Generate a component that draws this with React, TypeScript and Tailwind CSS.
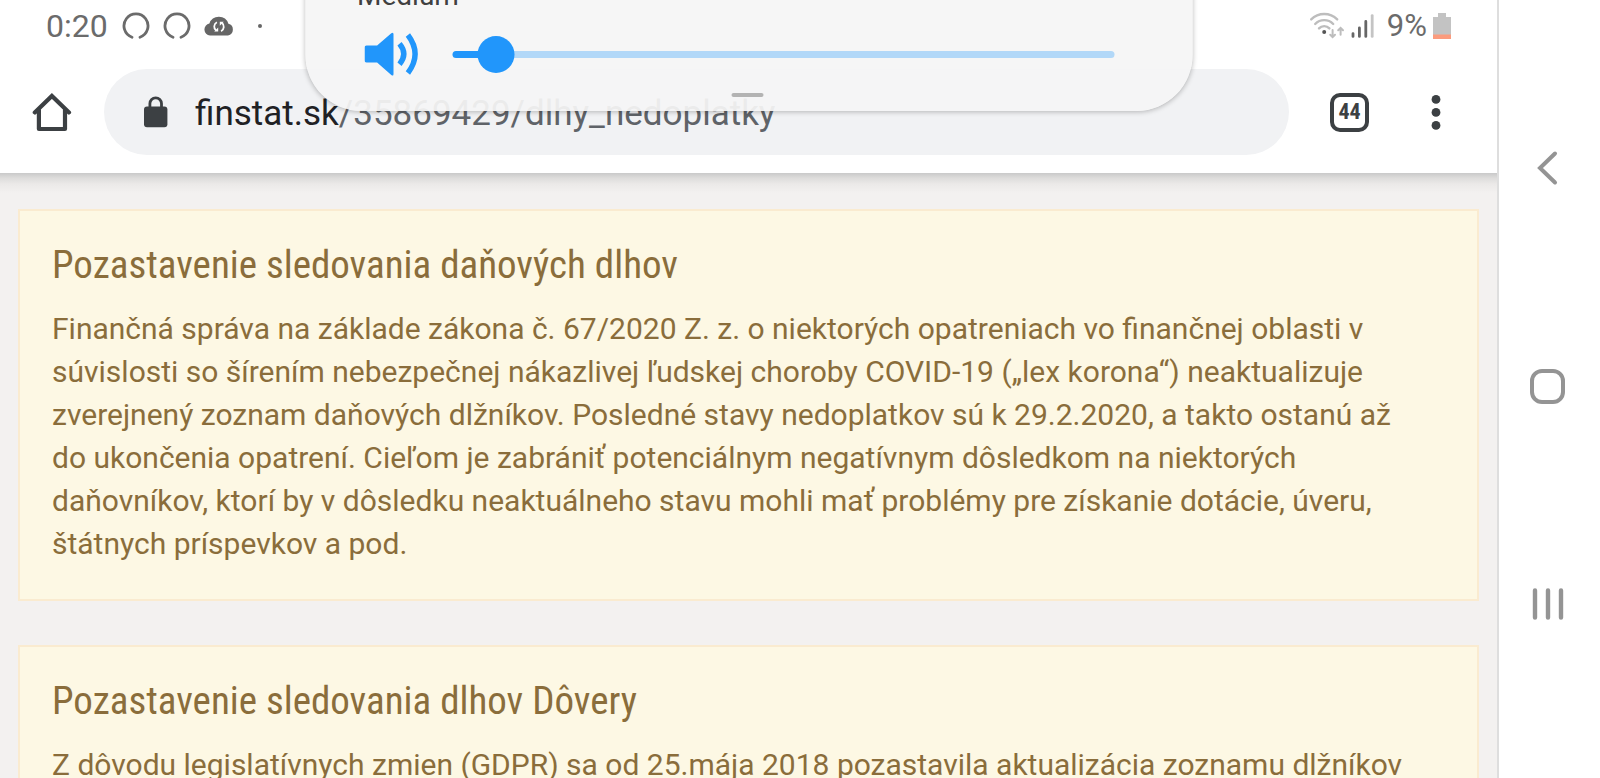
import { useState } from "react";
import type { CSSProperties } from "react";

function LoadingRing() {
  return (
    <svg className="size-7" viewBox="0 0 28 28" fill="none" stroke="#6b6b6b" strokeWidth="2.8" strokeLinecap="round">
      <path d="M10 25.2A12 12 0 1 1 18 25.2" />
    </svg>
  );
}

function StatusBar() {
  return (
    <div className="flex h-[50px] items-center justify-between pt-0.5 pr-[46px] pl-[46px] text-[#6b6b6b]">
      <div className="flex items-center">
        <span className="mr-3.5 text-[32px] leading-[48px]">0:20</span>
        <div className="flex items-center gap-[13px]">
          <LoadingRing />
          <LoadingRing />
          <svg className="h-5 w-[30px]" viewBox="0 0 30 20">
            <path
              fill="#666"
              d="M6 19.5A6 6 0 0 1 5.4 7.6 10 10 0 0 1 24.4 7.8 6 6 0 0 1 24 19.5Z"
            />
            <g fill="none" stroke="#fff" strokeWidth="1.8">
              <path d="M12.9 6.2A5 5 0 0 0 12.2 14.6" />
              <path d="M17.1 15.2A5 5 0 0 0 17.8 6.8" />
            </g>
            <path fill="#fff" d="M10.2 15.6h4v-4zM19.8 5.8h-4v4z" />
          </svg>
        </div>
        <span className="ml-6 size-1 rounded-full bg-[#666]" />
      </div>
      <div className="flex items-center">
        <svg className="mr-1.5 h-7 w-9" viewBox="0 0 36 28" fill="none" stroke="#bdbdbd" strokeWidth="2.4" strokeLinecap="round">
          <path d="M2.2 7.4A18.5 18.5 0 0 1 28.2 7.4" />
          <path d="M6.2 12A12.5 12.5 0 0 1 24.2 12" />
          <path d="M10 16.4A7 7 0 0 1 20.4 16.4" />
          <circle cx="15.2" cy="20" r="2" fill="#555" stroke="none" />
          <path strokeWidth="2" d="M23.6 18v7M21.2 22.8l2.4 2.4 2.4-2.4M31.6 22.8V16M29.2 18.2l2.4-2.4 2.4 2.4" />
        </svg>
        <svg className="mr-3 h-7 w-6" viewBox="0 0 24 28" strokeWidth="2.8" strokeLinecap="round">
          <path stroke="#666" d="M2 21.6v2.8M8.4 16v8.4M14.8 9.4v15" />
          <path stroke="#c4c4c4" d="M21.2 3.6v20.8" />
        </svg>
        <span className="mr-1.5 text-[31px] leading-[48px]">9%</span>
        <svg className="h-[26px] w-[18px]" viewBox="0 0 18 26">
          <path fill="#c3c3c3" d="M5 0h8v4h5v18H0V4h5z" />
          <path fill="#fb9b7d" d="M0 21.5h18V26H0z" />
        </svg>
      </div>
    </div>
  );
}

function BrowserBar() {
  return (
    <div className="flex h-[86px] items-center">
      <button type="button" aria-label="Domov" className="ml-8 flex size-10 shrink-0 items-center justify-center">
        <svg className="size-10" viewBox="0 0 40 40" fill="none" stroke="#3c4043" strokeWidth="4.2" strokeLinecap="round" strokeLinejoin="round">
          <path d="M2.8 20.4 19.9 4 37 20.4" strokeLinejoin="miter" />
          <path d="M6.9 18V37H33V18" />
        </svg>
      </button>
      <div className="ml-8 flex h-full flex-1 items-center rounded-full bg-[#f1f2f4] pl-10">
        <svg className="mr-[27px] h-8 w-6" viewBox="0 0 24 32">
          <rect x="0" y="10.6" width="23.4" height="20.6" rx="3" fill="#3c4043" />
          <path d="M5.9 12V7.6a5.8 5.8 0 0 1 11.6 0V12" fill="none" stroke="#3c4043" strokeWidth="2.8" />
        </svg>
        <a href="#" className="pt-1 text-[35px] leading-[48px] text-[#5f6368]">
          <span className="text-[#202124]">finstat.sk</span>/35869429/dlhy_nedoplatky
        </a>
      </div>
      <button
        type="button"
        aria-label="Karty: 44"
        className="ml-[41px] flex size-[39px] shrink-0 items-center justify-center rounded-[10px] border-4 border-[#3c4043] font-['Roboto_Condensed','Roboto',sans-serif] text-[22px] leading-6 font-bold text-[#3c4043]"
      >
        44
      </button>
      <button type="button" aria-label="Ponuka" className="mr-[41px] ml-[47px] flex h-12 w-10 shrink-0 items-center justify-center">
        <svg className="h-9 w-[10px]" viewBox="0 0 10 36" fill="#3c4043">
          <circle cx="5" cy="5.4" r="4.4" />
          <circle cx="5" cy="18.4" r="4.4" />
          <circle cx="5" cy="31.4" r="4.4" />
        </svg>
      </button>
    </div>
  );
}

function VolumePanel() {
  const [volume, setVolume] = useState(4);
  const style = { "--fill": `${volume + 2}%` } as CSSProperties;
  return (
    <section
      aria-label="Hlasitosť"
      className="absolute -top-5 left-1/2 z-20 w-[887px] -translate-x-1/2 rounded-b-[56px] bg-[#f5f5f5]/93 pr-[78px] pb-3.5 pl-[52px] shadow-[0_1px_5px_rgba(0,0,0,0.25)]"
    >
      <label htmlFor="volume" className="block text-[28px] leading-8 text-[#404040]">
        Medium
      </label>
      <div className="mt-[18px] flex h-12 items-center gap-[34px] pl-[7px]">
        <svg className="h-11 w-[54px] shrink-0" viewBox="0 0 54 44">
          <path fill="#2196fb" d="M2 13.6h10.6L26.8 1.2q2.2-1.4 2.2 1V42q0 2.4-2.2 1L12.6 30.6H2q-2 0-2-2v-13q0-2 2-2z" />
          <g fill="none" stroke="#2196fb" strokeWidth="5.4">
            <path d="M35 11.8Q43.6 22 35 32.2" />
            <path d="M43.4 3Q57.8 22 43.4 41" />
          </g>
        </svg>
        <input
          id="volume"
          type="range"
          min={0}
          max={100}
          value={volume}
          onChange={(e) => setVolume(Number(e.target.value))}
          style={style}
          className="h-9 min-w-0 flex-1 cursor-pointer appearance-none bg-transparent [&::-webkit-slider-runnable-track]:h-[7px] [&::-webkit-slider-runnable-track]:rounded-full [&::-webkit-slider-runnable-track]:bg-[linear-gradient(to_right,#2196fb_var(--fill),#b2d8f8_var(--fill))] [&::-webkit-slider-thumb]:-mt-[15px] [&::-webkit-slider-thumb]:size-[37px] [&::-webkit-slider-thumb]:appearance-none [&::-webkit-slider-thumb]:rounded-full [&::-webkit-slider-thumb]:bg-[#2196fb]"
        />
      </div>
      <div className="mt-[15px] flex justify-center pl-6">
        <span className="h-1 w-8 rounded-full bg-[#b3b3b3]" />
      </div>
    </section>
  );
}

function Notice({ title, text }: { title: string; text: string }) {
  return (
    <article className="border-2 border-[#faebd0] bg-[#fdf8e4] pt-8 pr-16 pb-[34px] pl-8 text-[#8a6d3b]">
      <h2 className="mb-5 font-['Roboto_Condensed','Roboto',sans-serif] text-[39px] leading-[44px]">{title}</h2>
      <p className="text-[30px] leading-[43px]">{text}</p>
    </article>
  );
}

function NavigationBar() {
  const button = "flex size-12 items-center justify-center";
  return (
    <nav aria-label="Navigácia" className="flex w-[103px] shrink-0 flex-col items-center justify-center gap-[170px] border-l-2 border-[#dedede] bg-white pr-1 pb-1.5">
      <button type="button" aria-label="Späť" className={button}>
        <svg className="h-9 w-6" viewBox="0 0 24 36" fill="none" stroke="#949494" strokeWidth="4" strokeLinecap="round">
          <path d="M19 3.5 4 18l15 14.5" />
        </svg>
      </button>
      <button type="button" aria-label="Domov" className={button}>
        <span className="size-[35px] rounded-[12px] border-4 border-[#949494]" />
      </button>
      <button type="button" aria-label="Posledné" className={button}>
        <svg className="h-9 w-8" viewBox="0 0 32 36" stroke="#949494" strokeWidth="4.4" strokeLinecap="round">
          <path d="M3 4.5v27M16 4.5v27M29 4.5v27" />
        </svg>
      </button>
    </nav>
  );
}

export default function App() {
  return (
    <div className="flex h-screen overflow-hidden bg-white font-['Roboto',sans-serif]">
      <div className="relative flex min-w-0 flex-1 flex-col overflow-hidden">
        <header className="flex shrink-0 flex-col gap-[19px] bg-white pb-[18px]">
          <StatusBar />
          <BrowserBar />
        </header>
        <VolumePanel />
        <main className="flex min-h-0 flex-1 flex-col gap-11 overflow-hidden bg-[linear-gradient(#c9c9c9,#dddcdb_5px,#ebe9e8_11px,#f3f1f0_20px)] px-[18px] pt-9 *:shrink-0">
          <Notice
            title="Pozastavenie sledovania daňových dlhov"
            text="Finančná správa na základe zákona č. 67/2020 Z. z. o niektorých opatreniach vo finančnej oblasti v súvislosti so šírením nebezpečnej nákazlivej ľudskej choroby COVID-19 („lex korona“) neaktualizuje zverejnený zoznam daňových dlžníkov. Posledné stavy nedoplatkov sú k 29.2.2020, a takto ostanú až do ukončenia opatrení. Cieľom je zabrániť potenciálnym negatívnym dôsledkom na niektorých daňovníkov, ktorí by v dôsledku neaktuálneho stavu mohli mať problémy pre získanie dotácie, úveru, štátnych príspevkov a pod."
          />
          <Notice
            title="Pozastavenie sledovania dlhov Dôvery"
            text="Z dôvodu legislatívnych zmien (GDPR) sa od 25.mája 2018 pozastavila aktualizácia zoznamu dlžníkov"
          />
        </main>
      </div>
      <NavigationBar />
    </div>
  );
}
